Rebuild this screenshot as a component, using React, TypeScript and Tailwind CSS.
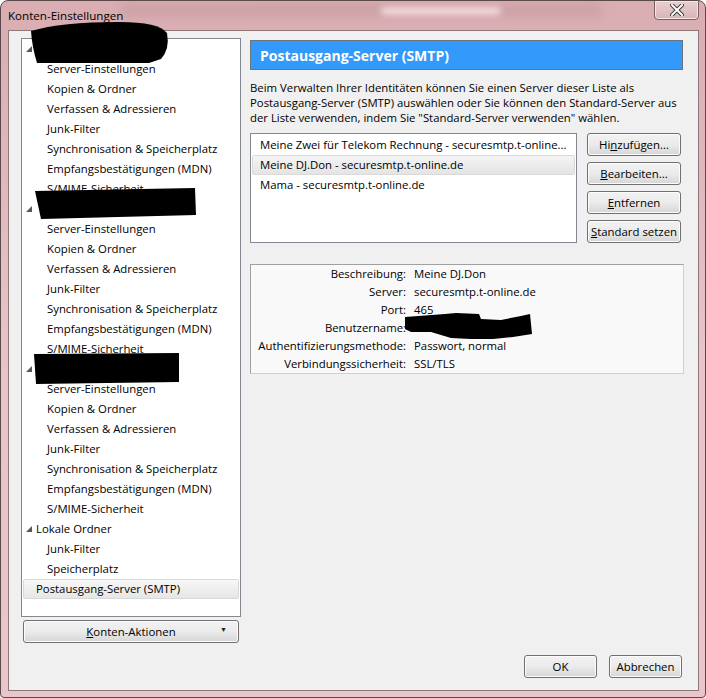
import type { ReactNode } from "react";

const FONT = "font-['Open_Sans','Noto_Sans',sans-serif]";

const Tri = () => (
  <svg width="6" height="6" viewBox="0 0 6 6" className="shrink-0">
    <polygon points="6,0 6,6 0,6" fill="#595959" />
  </svg>
);

type TreeRow = { label: string; level: 0 | 1; open?: boolean; selected?: boolean };

const accountRows = (): TreeRow[] => [
  { label: "", level: 0, open: true },
  { label: "Server-Einstellungen", level: 1 },
  { label: "Kopien & Ordner", level: 1 },
  { label: "Verfassen & Adressieren", level: 1 },
  { label: "Junk-Filter", level: 1 },
  { label: "Synchronisation & Speicherplatz", level: 1 },
  { label: "Empfangsbestätigungen (MDN)", level: 1 },
  { label: "S/MIME-Sicherheit", level: 1 },
];

const rows: TreeRow[] = [
  ...accountRows(),
  ...accountRows(),
  ...accountRows(),
  { label: "Lokale Ordner", level: 0, open: true },
  { label: "Junk-Filter", level: 1 },
  { label: "Speicherplatz", level: 1 },
  { label: "Postausgang-Server (SMTP)", level: 0, selected: true },
];

const Btn = ({ children, className = "" }: { children: ReactNode; className?: string }) => (
  <button
    className={`h-[23px] rounded-[3px] border border-[#707070] bg-gradient-to-b from-[#f2f2f2] via-[#ebebeb] to-[#d6d6d6] text-[11.4px] text-black shadow-[inset_0_0_0_1px_#fcfcfc] ${className}`}
  >
    {children}
  </button>
);

const details: [string, string][] = [
  ["Beschreibung:", "Meine DJ.Don"],
  ["Server:", "securesmtp.t-online.de"],
  ["Port:", "465"],
  ["Benutzername:", ""],
  ["Authentifizierungsmethode:", "Passwort, normal"],
  ["Verbindungssicherheit:", "SSL/TLS"],
];

export default function App() {
  return (
    <div className={`relative w-[706px] h-[698px] overflow-hidden rounded-t-[8px] rounded-b-[4px] border border-[#5a4a4c] bg-gradient-to-b from-[#d9adb2] via-[#e6c4c7] to-[#e8c6c9] ${FONT} text-[11.35px] text-black`}>
      {/* title bar */}
      <div className="relative h-[29px]">
        <div className="absolute left-[120px] top-[2px] h-[14px] w-[480px] rounded-[4px] bg-[#c99ea3] blur-[4px] opacity-70" />
        <div className="absolute left-[380px] top-[6px] h-[8px] w-[120px] rounded-[4px] bg-[#f3dadc] blur-[3px]" />
        <div className="absolute left-[7px] top-[6px] text-[11.6px] text-black">Konten-Einstellungen</div>
        <div className="absolute right-[6px] top-[-1px] flex h-[20px] w-[45px] items-center justify-center rounded-b-[4px] border border-[#7a5d61] bg-gradient-to-b from-[#e9cfd2] to-[#d9b3b7] shadow-[inset_0_0_0_1px_#f6e6e7]">
          <svg width="14" height="12" viewBox="0 0 14 12">
            <path d="M2 1 L12 11 M12 1 L2 11" stroke="#3b3b3b" strokeWidth="4" strokeLinecap="square" />
            <path d="M2 1 L12 11 M12 1 L2 11" stroke="#ffffff" strokeWidth="2" strokeLinecap="square" />
          </svg>
        </div>
      </div>

      {/* client area */}
      <div className="ml-[7px] h-[661px] w-[691px] border border-[#8d7779] bg-[#f0f0f0] pl-[12px] pt-[7px]">
        <div className="flex">
          {/* left column */}
          <div className="flex w-[220px] flex-col">
            <div className="h-[579px] border border-[#828790] bg-white">
              {rows.map((r, i) => (
                <div
                  key={i}
                  className={`mx-[1px] flex h-[20px] items-center ${
                    r.selected
                      ? "rounded-[2px] border border-[#d9d9d9] bg-gradient-to-b from-[#f7f7f7] to-[#e6e6e6]"
                      : ""
                  }`}
                >
                  {r.level === 0 ? (
                    <>
                      <span className="flex w-[9px] justify-end">{r.open && <Tri />}</span>
                      <span className={`whitespace-nowrap ${r.selected ? "ml-[3px]" : "ml-[4px]"}`}>{r.label}</span>
                    </>
                  ) : (
                    <span className="ml-[24px] whitespace-nowrap">{r.label}</span>
                  )}
                </div>
              ))}
            </div>
            <Btn className="relative mx-[2px] mt-[3px] h-[22px]">
              <span>
                <span className="underline">K</span>onten-Aktionen
              </span>
              <span className="absolute right-[11px] top-[4px] text-[7px] text-[#222]">▼</span>
            </Btn>
          </div>

          {/* right column */}
          <div className="ml-[9px] w-[434px] pt-[2px]">
            <div className="flex h-[30px] w-[433px] items-center border border-[#6a747e] bg-[#3399fa] pl-[9px] text-[14px] font-bold text-white">
              Postausgang-Server (SMTP)
            </div>
            <p className="mt-[10px] whitespace-nowrap leading-[15px]">
              Beim Verwalten Ihrer Identitäten können Sie einen Server dieser Liste als
              <br />
              Postausgang-Server (SMTP) auswählen oder Sie können den Standard-Server aus
              <br />
              der Liste verwenden, indem Sie "Standard-Server verwenden" wählen.
            </p>
            <div className="mt-[8px] flex">
              <div className="h-[110px] w-[327px] border border-[#828790] bg-white p-[1px]">
                <div className="flex h-[20px] items-center pl-[8px] whitespace-nowrap">
                  Meine Zwei für Telekom Rechnung - securesmtp.t-online...
                </div>
                <div className="flex h-[20px] items-center rounded-[2px] border border-[#dadada] bg-gradient-to-b from-[#f4f4f4] to-[#e4e4e4] pl-[7px] whitespace-nowrap">
                  Meine DJ.Don - securesmtp.t-online.de
                </div>
                <div className="flex h-[20px] items-center pl-[8px] whitespace-nowrap">Mama - securesmtp.t-online.de</div>
              </div>
              <div className="ml-[10px] flex w-[94px] flex-col gap-[6px]">
                <Btn>
                  Hi<span className="underline">n</span>zufügen...
                </Btn>
                <Btn>
                  <span className="underline">B</span>earbeiten...
                </Btn>
                <Btn>
                  <span className="underline">E</span>ntfernen
                </Btn>
                <Btn>
                  <span className="underline">S</span>tandard setzen
                </Btn>
              </div>
            </div>
            <div className="mt-[21px] h-[110px] w-[434px] border border-[#d0d0d0] border-l-[#a0a0a0] border-t-[#a0a0a0] bg-[#f9f9f9]">
              {details.map(([k, v]) => (
                <div key={k} className="flex h-[18px] items-center">
                  <span className="w-[155px] whitespace-nowrap text-right">{k}</span>
                  <span className="ml-[8px] whitespace-nowrap">{v}</span>
                </div>
              ))}
            </div>
          </div>
        </div>

        <div className="mt-[12px] flex justify-end gap-[12px] pr-[16px]">
          <Btn className="w-[73px] border-[#3c7fb1] shadow-[inset_0_0_0_1px_#bfe4f7,inset_0_0_0_2px_#e3f1fa]">OK</Btn>
          <Btn className="w-[73px]">Abbrechen</Btn>
        </div>
      </div>

      {/* redaction marks */}
      <svg className="pointer-events-none absolute left-0 top-0" width="706" height="698" viewBox="0 0 706 698">
        <path d="M30 30 Q60 21 118 21 Q158 21 166 32 Q169 48 160 58 L148 62 L36 62 Q31 46 30 30 Z" fill="#000" />
        <path d="M34 190 L194 187 L195 214 L40 218 Z" fill="#000" />
        <path d="M33 353 L178 352 L178 381 L35 383 Z" fill="#000" />
        <path d="M404 316 L444 313 L455 312 L478 313 L480 318 L500 319 L520 315 L529 313 L531 333 L512 336 L492 338 L470 338 L450 337 L430 331 L410 331 L404 328 Z" fill="#000" />
      </svg>
    </div>
  );
}
